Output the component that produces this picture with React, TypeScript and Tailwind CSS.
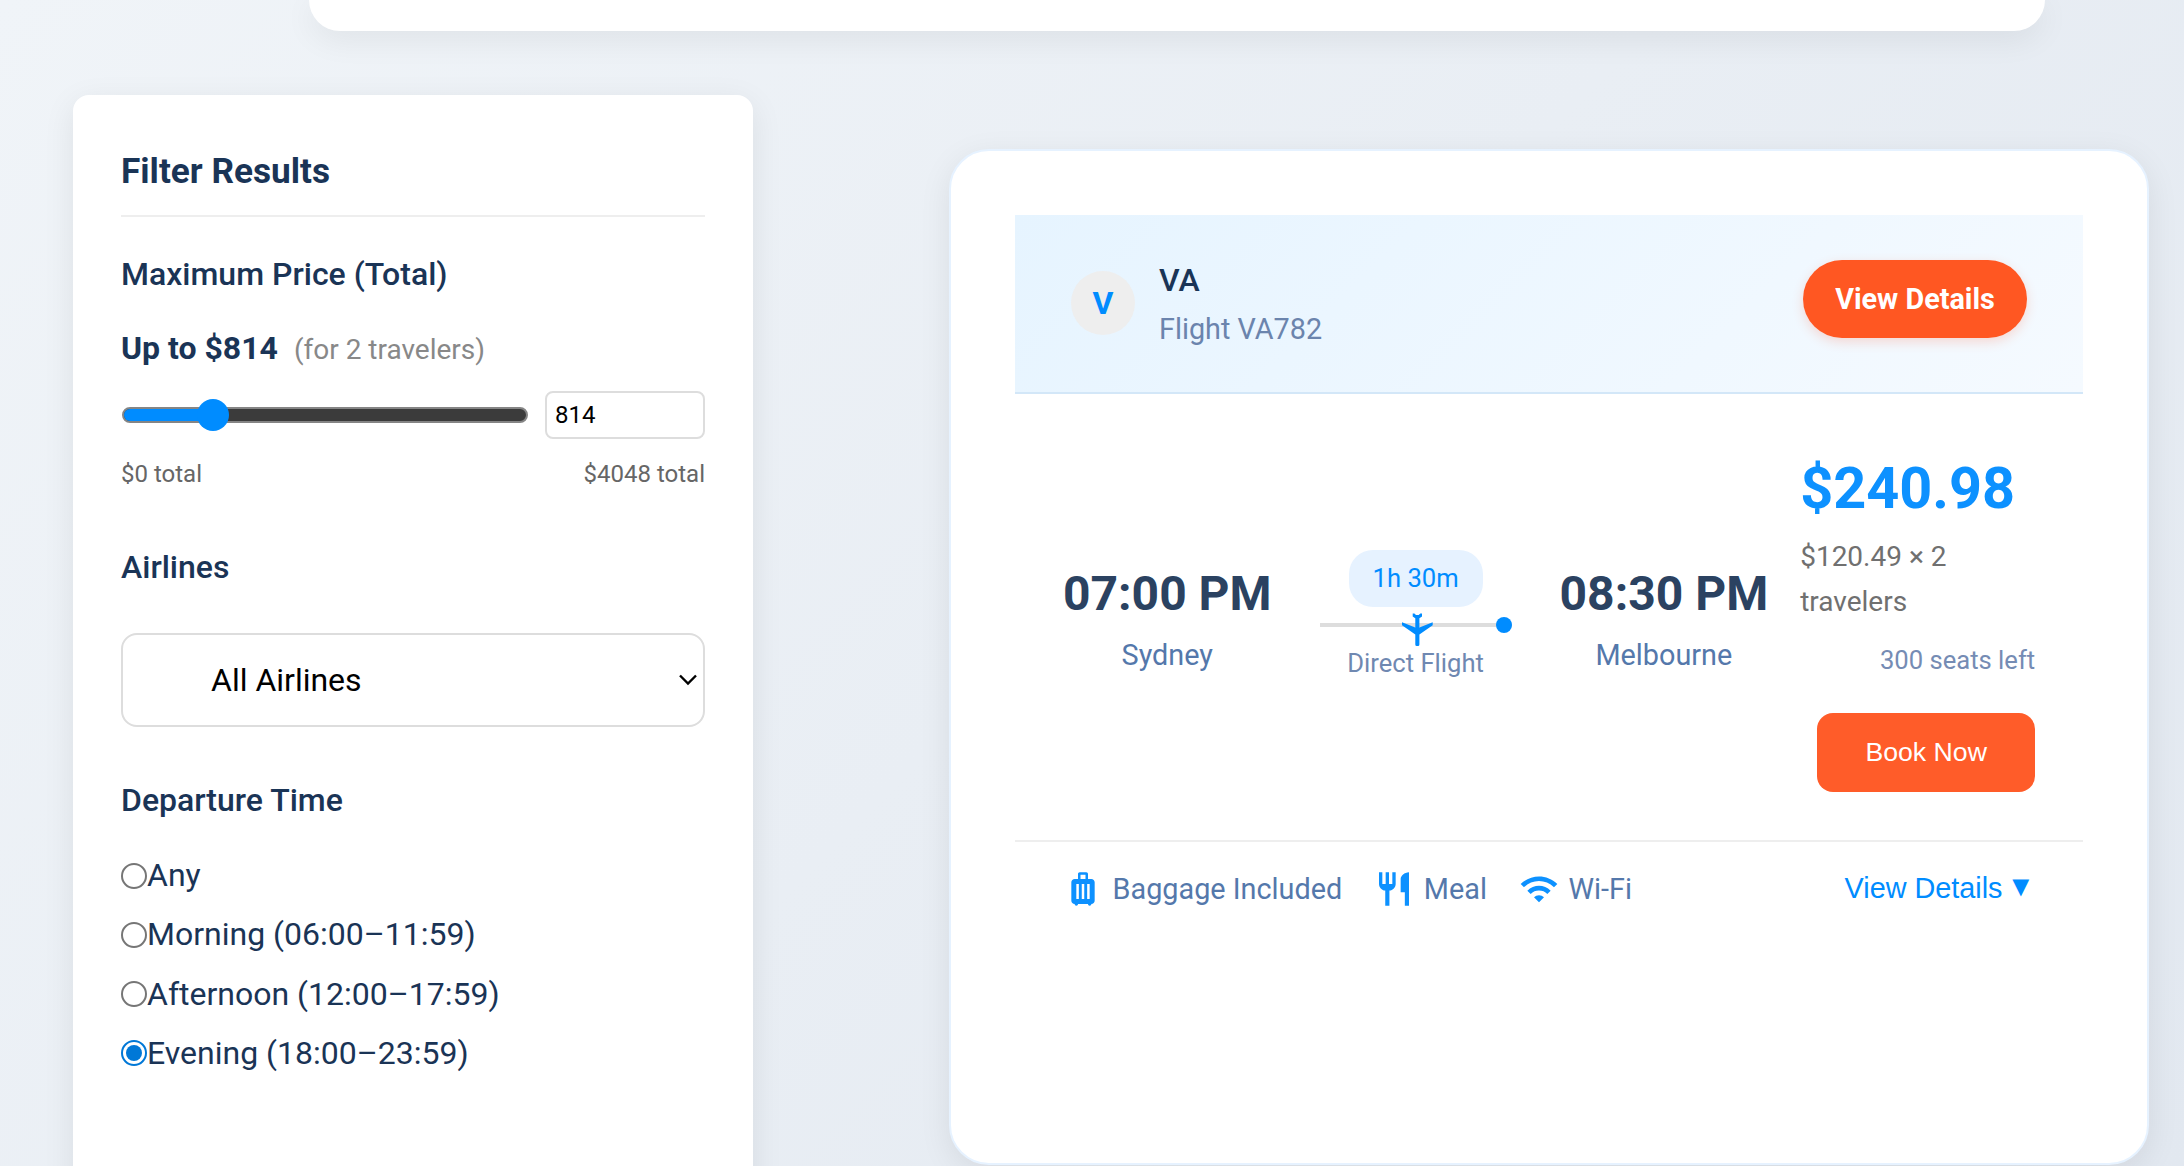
import { MdLuggage, MdRestaurant, MdWifi } from "react-icons/md";

const times = [
  { label: "Any", on: false },
  { label: "Morning (06:00–11:59)", on: false },
  { label: "Afternoon (12:00–17:59)", on: false },
  { label: "Evening (18:00–23:59)", on: true },
];

function Plane() {
  return (
    <svg className="absolute left-[82px] top-[-10px] h-[33px] w-[31px]" viewBox="0 0 31 33" fill="#008cff">
      <path d="M10.7 0.4 L12.4 0.6 L14 1.9 H16.7 L18.3 0.6 L20 0.4 V3.4 L17.4 5.2 V14.6 L30.7 9.3 V12.3 L17.4 21.5 V31.5 Q17.4 33 16 33 H14.7 Q13.3 33 13.3 31.5 V21.5 L0 12.3 V9.3 L13.3 14.6 V5.2 L10.7 3.4 Z" />
    </svg>
  );
}

function Filters() {
  return (
    <aside className="mt-16 ml-[73px] h-[1200px] w-[680px] shrink-0 rounded-2xl bg-white px-12 pt-12 text-[32px] leading-[51.2px] text-[#1a3456] shadow-[0_8px_32px_rgba(0,0,0,0.08)]">
      <h2 className="h-[74px] border-b-2 border-[#eee] text-[35.2px] leading-[56px] font-bold">Filter Results</h2>
      <h3 className="mt-8 font-medium">Maximum Price (Total)</h3>
      <div className="mt-6 flex h-[51px] items-baseline gap-4">
        <span className="leading-[49px] font-bold">Up to $814</span>
        <span className="text-[28px] leading-none text-[#888]">(for 2 travelers)</span>
      </div>
      <div className="mt-4 flex h-12 items-center justify-between">
        <div className="relative ml-px h-4 w-[406px] rounded-full border-2 border-[#858585] bg-[#3b3b3b]">
          <div className="h-full w-[91px] rounded-l-full bg-[#008cff]" />
          <div className="absolute top-[-10px] left-[73px] size-8 rounded-full bg-[#008cff]" />
        </div>
        <div className="flex h-12 w-40 items-center rounded-lg border-2 border-[#ddd] pl-2 text-[24px] text-black">814</div>
      </div>
      <div className="mt-4 flex justify-between text-[24px] leading-[38px] text-[#666]">
        <span>$0 total</span>
        <span>$4048 total</span>
      </div>
      <h3 className="mt-[49px] font-medium">Airlines</h3>
      <div className="mt-10 flex h-[93.5px] items-center justify-between rounded-2xl border-2 border-[#ddd] pl-[88px] pr-[6px] text-black">
        <span>All Airlines</span>
        <svg className="h-3 w-[18px]" viewBox="0 0 18 12" fill="none" stroke="#000" strokeWidth="2.4">
          <path d="M1 1.5 L9 9.5 L17 1.5" />
        </svg>
      </div>
      <h3 className="mt-12 font-medium">Departure Time</h3>
      <div className="mt-6 flex flex-col gap-2">
        {times.map((t) => (
          <div key={t.label} className="flex items-center">
            <span className={t.on ? "flex size-[26px] items-center justify-center rounded-full border-2 border-[#0078d7]" : "size-[26px] rounded-full border-2 border-[#767676]"}>
              {t.on && <span className="size-4 rounded-full bg-[#0078d7]" />}
            </span>
            <span>{t.label}</span>
          </div>
        ))}
      </div>
    </aside>
  );
}

function Stop({ time, city }: { time: string; city: string }) {
  return (
    <div className="mb-0.5 text-center">
      <div className="text-[48px] leading-[77px] font-bold whitespace-nowrap text-[#2b4261]">{time}</div>
      <div className="text-[28.8px] leading-[46px] text-[#5478ab]">{city}</div>
    </div>
  );
}

function FlightCard() {
  return (
    <main className="mt-[118px] ml-[196px] h-[1016px] w-[1200px] shrink-0 rounded-[40px] border-2 border-[#e6f2ff] bg-white p-16 shadow-[0_8px_32px_rgba(0,0,0,0.08)]">
      <header className="flex h-[179px] items-center justify-between border-b-2 border-[#d3e7f8] bg-linear-[135deg] from-[#e6f4ff] to-[#f5faff] px-14">
        <div className="mb-px flex items-center gap-6">
          <div className="flex size-16 items-center justify-center rounded-full bg-[#eee] text-[32px] font-bold text-[#008cff]">V</div>
          <div>
            <div className="text-[32px] leading-[51px] font-medium text-[#1a3456]">VA</div>
            <div className="text-[28.8px] leading-[46px] text-[#6b84ad]">Flight VA782</div>
          </div>
        </div>
        <div className="mb-[9px] flex h-[78px] w-56 items-center justify-center rounded-full bg-[#ff5722] pt-px text-[28.8px] font-bold text-white shadow-[0_4px_12px_rgba(255,87,34,0.2)]">View Details</div>
      </header>
      <section className="flex h-[446px] items-center pl-12">
        <Stop time="07:00 PM" city="Sydney" />
        <div className="ml-12 flex w-48 flex-col items-center">
          <div className="rounded-3xl bg-[#e6f2ff] px-6 py-2 text-[25.6px] leading-[41px] text-[#008cff]">1h 30m</div>
          <div className="relative mt-4 h-1 w-full bg-[#ddd]">
            <Plane />
            <span className="absolute right-0 top-[-6px] size-4 rounded-full bg-[#008cff]" />
          </div>
          <div className="mt-4 text-[25.6px] leading-[41px] text-[#6f88b1]">Direct Flight</div>
        </div>
        <div className="ml-12">
          <Stop time="08:30 PM" city="Melbourne" />
        </div>
        <div className="ml-8 flex w-[235px] flex-col">
          <div className="pt-px text-[57.6px] leading-[91px] font-bold text-[#0d91ff]">$240.98</div>
          <div className="text-[28px] leading-[45px] text-[#707070]">$120.49 × 2<br />travelers</div>
          <div className="mt-4 self-end text-[25.6px] leading-[41px] text-[#758cb4]">300 seats left</div>
          <div className="mt-8 flex h-[79px] w-[218px] items-center justify-center self-end rounded-2xl bg-[#ff5c29] pb-px font-['Liberation_Sans'] text-[26.67px] text-white">Book Now</div>
        </div>
      </section>
      <footer className="flex items-center border-t-2 border-[#eee] px-12 pt-[23px] text-[28.8px] leading-[46px] text-[#5478ab]">
        <span className="flex items-center"><MdLuggage className="mr-[9.6px] size-10 text-[#0d91ff]" />Baggage Included</span>
        <span className="ml-8 flex items-center"><MdRestaurant className="mr-[9.6px] size-10 text-[#0d91ff]" />Meal</span>
        <span className="ml-8 flex items-center"><MdWifi className="mr-[9.6px] size-10 text-[#0d91ff]" />Wi-Fi</span>
        <span className="mb-px ml-auto font-['Liberation_Sans'] text-[#008cff]">
          View Details<span className="relative -top-0.5 ml-1 text-[28.8px] leading-none">▼</span>
        </span>
      </footer>
    </main>
  );
}

export default function App() {
  return (
    <div className="flex h-[1166px] w-[2184px] flex-col overflow-hidden bg-linear-[135deg] from-[#f0f4f8] to-[#e2e8f0] font-[Roboto,sans-serif]">
      <div className="ml-[309px] h-[31px] w-[1736px] shrink-0 rounded-b-[40px] bg-white shadow-[0_8px_32px_rgba(0,0,0,0.07)]" />
      <div className="flex items-start">
        <Filters />
        <FlightCard />
      </div>
    </div>
  );
}
